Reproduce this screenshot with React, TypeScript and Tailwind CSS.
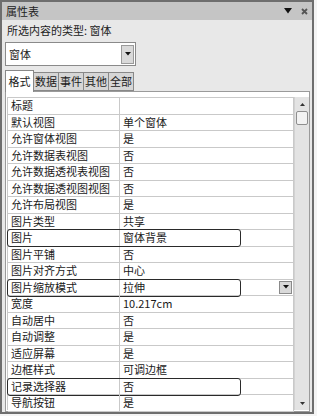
import React from 'react';

const rows: { label: string; value: string; boxed?: boolean; combo?: boolean }[] = [
  { label: '标题', value: '' },
  { label: '默认视图', value: '单个窗体' },
  { label: '允许窗体视图', value: '是' },
  { label: '允许数据表视图', value: '否' },
  { label: '允许数据透视表视图', value: '否' },
  { label: '允许数据透视图视图', value: '否' },
  { label: '允许布局视图', value: '是' },
  { label: '图片类型', value: '共享' },
  { label: '图片', value: '窗体背景', boxed: true },
  { label: '图片平铺', value: '否' },
  { label: '图片对齐方式', value: '中心' },
  { label: '图片缩放模式', value: '拉伸', boxed: true, combo: true },
  { label: '宽度', value: '10.217cm' },
  { label: '自动居中', value: '否' },
  { label: '自动调整', value: '是' },
  { label: '适应屏幕', value: '是' },
  { label: '边框样式', value: '可调边框' },
  { label: '记录选择器', value: '否', boxed: true },
  { label: '导航按钮', value: '是' },
];

const tabs = ['格式', '数据', '事件', '其他', '全部'];

const DownArrow = ({ size = 7 }: { size?: number }) => (
  <svg width={size} height={size * 0.6} viewBox="0 0 10 6">
    <path d="M0 0 L10 0 L5 6 Z" fill="#111" />
  </svg>
);

const App = () => {
  return (
    <div
      className="w-[317px] h-[416px] bg-[#f4f4f4] text-[11px] leading-none text-[#1a1a1a]"
      style={{ fontFamily: '"Noto Sans CJK SC", "Liberation Sans", sans-serif' }}
    >
      <div className="w-[314px] h-[414px] border-2 border-[#6e6e6e] bg-[#e8e8e8] flex flex-col overflow-hidden">
        {/* title bar */}
        <div className="h-[18px] shrink-0 bg-[#c5c5c5] flex items-center pl-[4px] pr-[4px]">
          <span className="text-[#222]">属性表</span>
          <div className="ml-auto flex items-center gap-[9px]">
            <svg width="8" height="6" viewBox="0 0 8 6">
              <path d="M0 0 L8 0 L4 5.5 Z" fill="#111" />
            </svg>
            <svg width="7" height="7" viewBox="0 0 7 7">
              <path d="M1 1 L6 6 M6 1 L1 6" stroke="#555" strokeWidth="1.8" />
            </svg>
          </div>
        </div>

        <div className="h-[20px] shrink-0 flex items-center pl-[5px] text-[#222]">所选内容的类型: 窗体</div>

        {/* combo */}
        <div className="ml-[3px] mt-[2px] shrink-0 w-[131px] h-[24px] bg-white border border-[#8a8a8a] flex items-center pl-[3px] pr-[1px]">
          <span>窗体</span>
          <div className="ml-auto w-[13px] h-[19px] bg-[#d9d9d9] border border-[#9a9a9a] flex items-center justify-center">
            <DownArrow size={6} />
          </div>
        </div>

        {/* tabs */}
        <div className="ml-[3px] mt-[3px] shrink-0 flex items-end h-[22px]">
          {tabs.map((t, i) => (
            <div
              key={t}
              className={
                i === 0
                  ? 'h-[22px] w-[29px] bg-white border border-b-0 border-[#888] flex items-center justify-center relative z-10 -mb-px'
                  : 'h-[19px] w-[25px] bg-[#d6d6d6] border border-l-0 border-[#888] flex items-center justify-center'
              }
            >
              {t}
            </div>
          ))}
        </div>

        {/* property grid panel */}
        <div className="ml-[3px] w-[305px] flex-1 min-h-0 bg-white border border-[#9a9a9a] pt-[5px] pl-[1px] pb-[1px] flex">
          <div className="flex-1 border-l border-t border-[#c9c9c9] flex flex-col">
            {rows.map((r) => (
              <div key={r.label} className="relative shrink-0 h-[16.5px] flex border-b border-[#c9c9c9]">
                <div className="w-[112px] border-r border-[#c9c9c9] pl-[3px] flex items-center whitespace-nowrap">
                  {r.label}
                </div>
                <div className="flex-1 pl-[3px] flex items-center border-r border-[#c9c9c9] whitespace-nowrap">
                  {r.value}
                  {r.combo && (
                    <div className="ml-auto mr-[1px] w-[13px] h-[13px] bg-[#d9d9d9] border border-[#8a8a8a] flex items-center justify-center">
                      <DownArrow size={6} />
                    </div>
                  )}
                </div>
                {r.boxed && (
                  <div className="absolute left-[-1px] top-[-1px] w-[234px] h-[18px] rounded-[3px] border-[1.5px] border-[#2a2a2a]" />
                )}
              </div>
            ))}
          </div>

          {/* scrollbar */}
          <div className="w-[15px] bg-[#e3e3e3] border-l border-[#d2d2d2] flex flex-col items-center">
            <div className="h-[14px] flex items-center justify-center">
              <svg width="5" height="3" viewBox="0 0 10 6">
                <path d="M0 6 L10 6 L5 0 Z" fill="#333" />
              </svg>
            </div>
            <div className="w-[12px] h-[14px] rounded-[2px] border border-[#8e8e8e] bg-[#f2f2f2]" />
            <div className="flex-1" />
            <div className="h-[14px] flex items-center justify-center">
              <svg width="5" height="3" viewBox="0 0 10 6">
                <path d="M0 0 L10 0 L5 6 Z" fill="#333" />
              </svg>
            </div>
          </div>
        </div>
      </div>
    </div>
  );
};

export default App;
